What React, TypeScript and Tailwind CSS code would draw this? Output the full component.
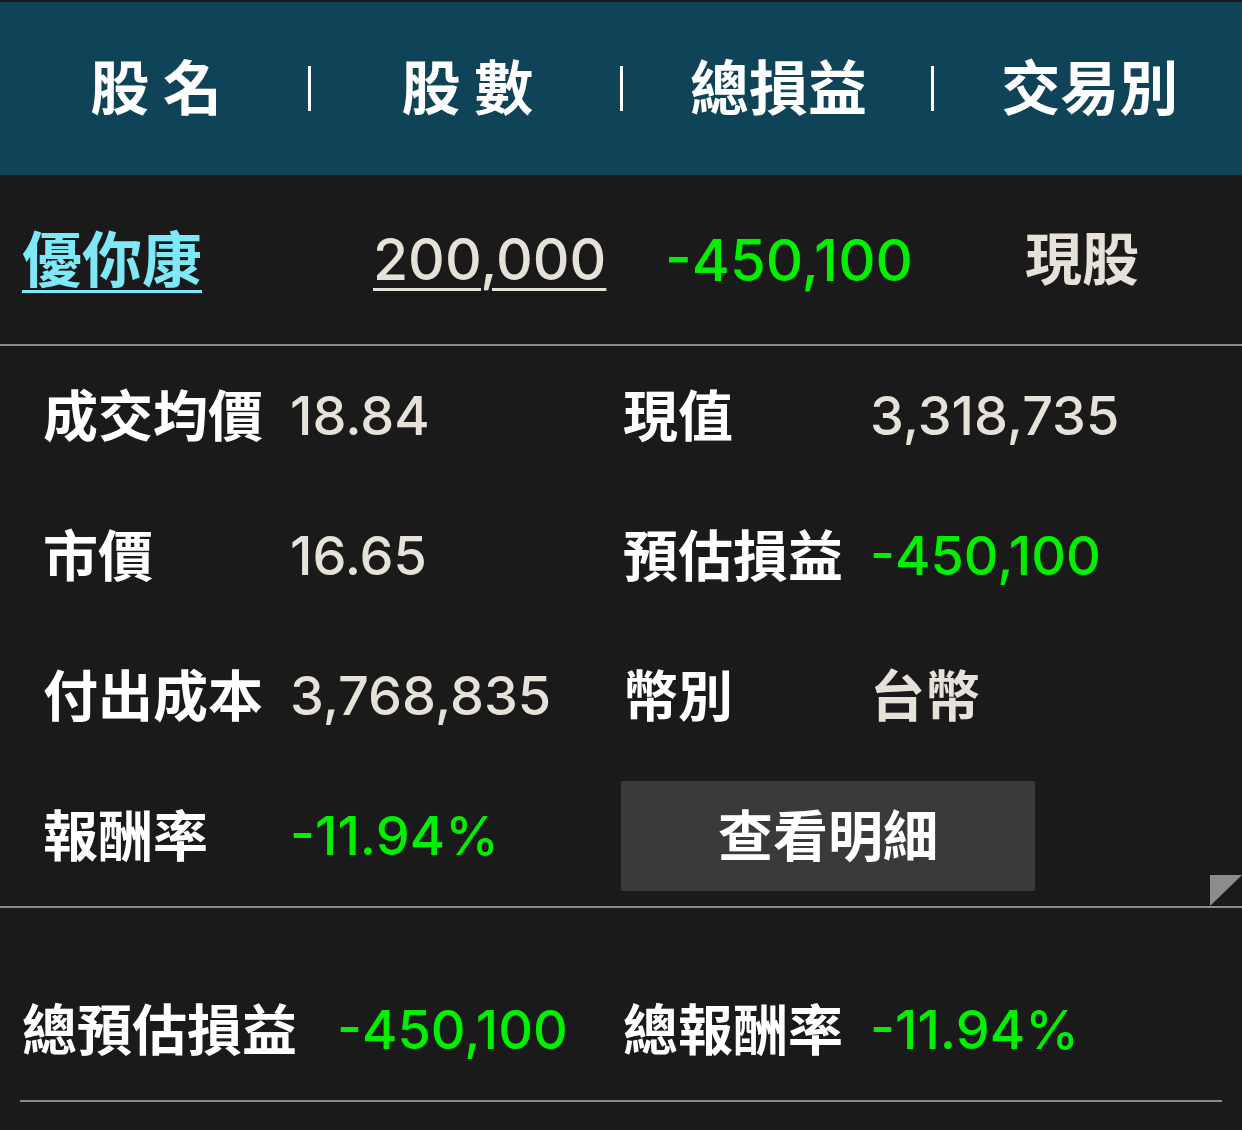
import React from "react";

const GREEN = "text-[#00f000]";

function Sep() {
  return <div className="w-[3px] h-[45px] bg-white shrink-0" />;
}

export default function App() {
  return (
    <div className="w-[1242px] h-[1130px] overflow-hidden bg-[#1a1a1a] pt-[2px] font-['Inter','Noto_Sans_CJK_TC',sans-serif]">
      {/* Header */}
      <div className="h-[173px] bg-[#0f4458] flex items-center text-white text-[59px] font-bold leading-none">
        <div className="flex-1 flex justify-center pl-[4px]">股 名</div>
        <Sep />
        <div className="flex-1 flex justify-center pl-[4px]">股 數</div>
        <Sep />
        <div className="flex-1 flex justify-center pl-[4px]">總損益</div>
        <Sep />
        <div className="flex-1 flex justify-center pl-[4px]">交易別</div>
      </div>

      {/* Stock row */}
      <div className="h-[171px] border-b-2 border-[#8a8a8a] flex items-center pl-[22px] leading-none">
        <div className="w-[351px] shrink-0">
          <span className="text-[60px] font-bold text-[#7ee8f7] underline decoration-[3px] underline-offset-[8px]">
            優你康
          </span>
        </div>
        <div className="w-[292px] shrink-0">
          <span className="text-[57px] font-medium text-[#e6e2da] underline decoration-[3px] underline-offset-[8px]">
            200,000
          </span>
        </div>
        <div className={`w-[360px] shrink-0 text-[58px] font-medium ${GREEN}`}>-450,100</div>
        <div className="text-[57px] font-bold text-[#e6e2da]">現股</div>
      </div>

      {/* Details */}
      <div className="relative border-b-2 border-[#8a8a8a] pl-[43px] leading-none">
        <div className="h-[140px] flex items-center">
          <div className="w-[247px] shrink-0 text-[55px] font-bold text-white">成交均價</div>
          <div className="w-[333px] shrink-0 text-[54px] font-medium text-[#e6e2da]">18.84</div>
          <div className="w-[247px] shrink-0 text-[55px] font-bold text-white">現值</div>
          <div className="text-[54px] font-medium text-[#e6e2da]">3,318,735</div>
        </div>
        <div className="h-[140px] flex items-center">
          <div className="w-[247px] shrink-0 text-[55px] font-bold text-white">市價</div>
          <div className="w-[333px] shrink-0 text-[54px] font-medium text-[#e6e2da]">16.65</div>
          <div className="w-[247px] shrink-0 text-[55px] font-bold text-white">預估損益</div>
          <div className={`text-[54px] font-medium ${GREEN}`}>-450,100</div>
        </div>
        <div className="h-[140px] flex items-center">
          <div className="w-[247px] shrink-0 text-[55px] font-bold text-white">付出成本</div>
          <div className="w-[333px] shrink-0 text-[54px] font-medium text-[#e6e2da]">3,768,835</div>
          <div className="w-[247px] shrink-0 text-[55px] font-bold text-white">幣別</div>
          <div className="text-[55px] font-bold text-[#e6e2da]">台幣</div>
        </div>
        <div className="h-[140px] flex items-center">
          <div className="w-[247px] shrink-0 text-[55px] font-bold text-white">報酬率</div>
          <div className={`w-[331px] shrink-0 text-[54px] font-medium ${GREEN}`}>-11.94%</div>
          <button className="w-[414px] h-[110px] bg-[#3a3a3a] text-white text-[55px] font-bold flex items-center justify-center">
            查看明細
          </button>
        </div>
        <svg
          className="absolute right-0 bottom-0"
          width="32"
          height="31"
          viewBox="0 0 32 31"
        >
          <polygon points="0,0 32,0 0,31" fill="#8c8c8c" />
        </svg>
      </div>

      {/* Summary */}
      <div className="mx-[20px] h-[194px] border-b-2 border-[#8a8a8a] flex items-center pt-[52px] pl-[2px] leading-none">
        <div className="w-[315px] shrink-0 text-[55px] font-bold text-white">總預估損益</div>
        <div className={`w-[286px] shrink-0 text-[54px] font-medium ${GREEN}`}>-450,100</div>
        <div className="w-[247px] shrink-0 text-[55px] font-bold text-white">總報酬率</div>
        <div className={`text-[54px] font-medium ${GREEN}`}>-11.94%</div>
      </div>
    </div>
  );
}
